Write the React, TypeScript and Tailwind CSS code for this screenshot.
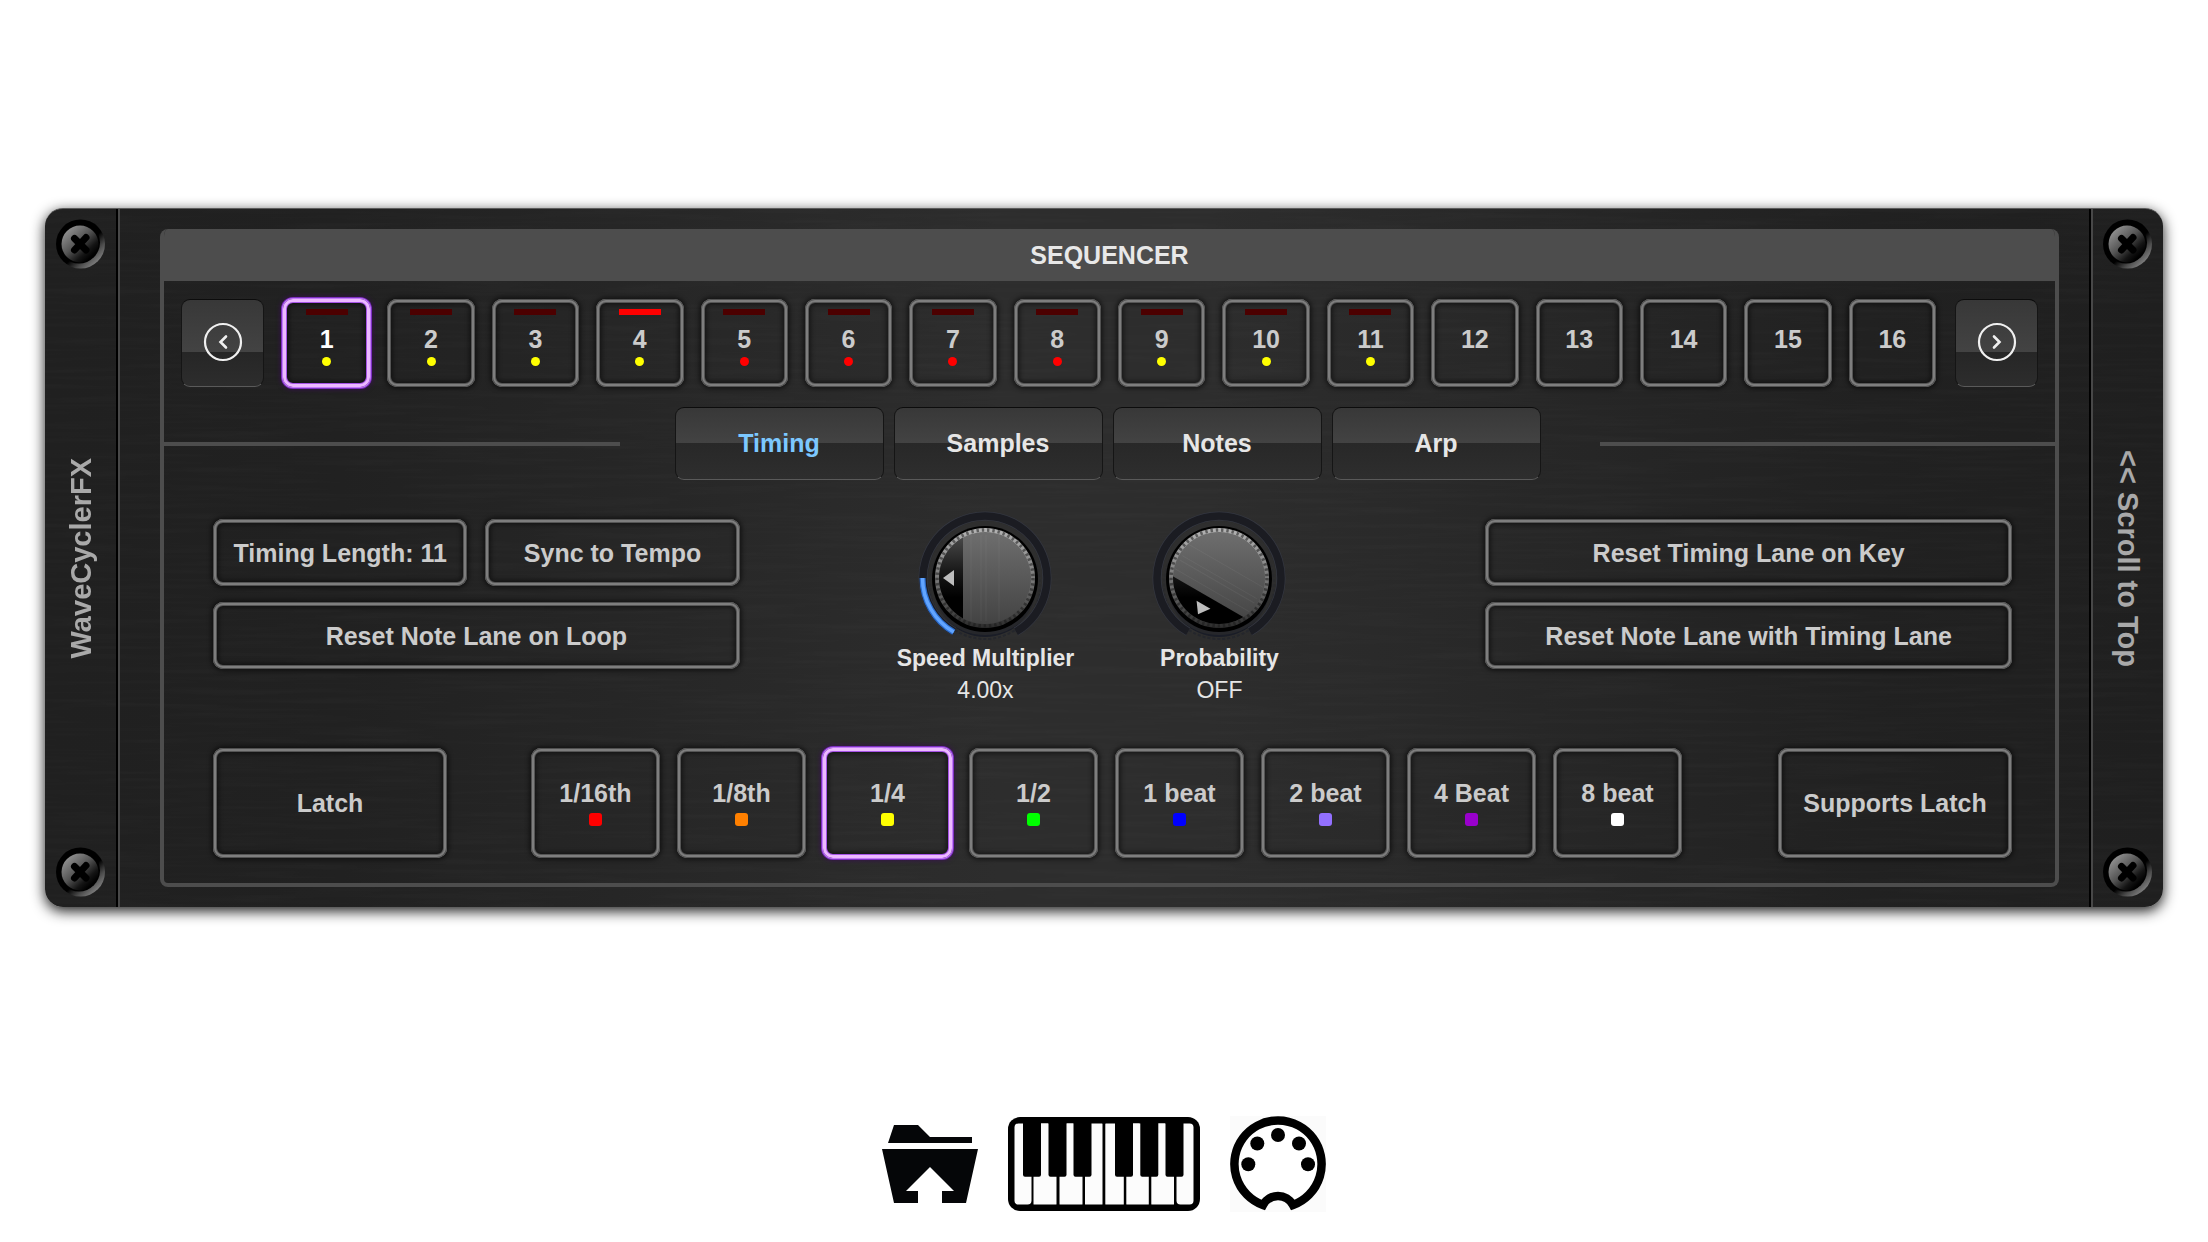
import { useId, useState, type ReactNode } from "react";

const OUTLINE =
  "rounded-[10px] shadow-[inset_0_0_0_1px_#505050,inset_0_0_0_3px_#7e7e7e,inset_0_0_0_4px_#555555,inset_0_0_4px_6px_rgba(0,0,0,0.45),0_0_4px_2px_rgba(0,0,0,0.5)]";
const OUTLINE_ACTIVE =
  "rounded-[10px] shadow-[inset_0_0_0_3px_#ecb9ff,inset_0_0_0_4px_#a653e6,inset_0_0_4px_6px_rgba(0,0,0,0.5),0_0_0_1px_#c27af8,0_0_0_2px_#7c2fc0,0_0_4px_3px_rgba(60,10,90,0.6)]";
const GLOSS_EDGE =
  "rounded-[9px] border border-x-[#151515] border-t-[#0c0c0c] border-b-[#5a5a5a]";

type Step = { n: number; dot?: "yellow" | "red"; bar?: "dim" | "lit" };

const steps: Step[] = Array.from({ length: 16 }, (_, i) => {
  const n = i + 1;
  if (n > 11) return { n };
  return { n, dot: n >= 5 && n <= 8 ? "red" : "yellow", bar: n === 4 ? "lit" : "dim" };
});

const lengths = [
  { label: "1/16th", color: "bg-[#ff0000]" },
  { label: "1/8th", color: "bg-[#ff8000]" },
  { label: "1/4", color: "bg-[#ffff00]" },
  { label: "1/2", color: "bg-[#00ff00]" },
  { label: "1 beat", color: "bg-[#0000ff]" },
  { label: "2 beat", color: "bg-[#9370ff]" },
  { label: "4 Beat", color: "bg-[#9900cc]" },
  { label: "8 beat", color: "bg-white" },
];

const tabs = ["Timing", "Samples", "Notes", "Arp"];

function BrushedMetal() {
  const id = useId();
  return (
    <svg className="pointer-events-none absolute inset-0 -z-10 h-full w-full rounded-[18px] opacity-[0.015]" aria-hidden="true">
      <filter id={id} x="0" y="0" width="100%" height="100%">
        <feTurbulence type="fractalNoise" baseFrequency="0.008 0.2" numOctaves="2" seed="4" />
        <feColorMatrix type="matrix" values="1 0 0 0 0  1 0 0 0 0  1 0 0 0 0  0 3 0 0 -1.2" />
      </filter>
      <rect width="100%" height="100%" filter={`url(#${id})`} />
    </svg>
  );
}

function Screw() {
  const id = useId();
  return (
    <svg viewBox="0 0 50 50" className="size-[50px] shrink-0" aria-hidden="true">
      <defs>
        <linearGradient id={`${id}rim`} x1="0.25" y1="0.2" x2="0.85" y2="0.85">
          <stop offset="0.55" stopColor="#000" />
          <stop offset="0.8" stopColor="#4c4c4c" />
          <stop offset="1" stopColor="#7a7a7a" />
        </linearGradient>
        <linearGradient id={`${id}head`} x1="0.15" y1="0.15" x2="0.8" y2="0.85">
          <stop offset="0" stopColor="#8c8c8c" />
          <stop offset="0.45" stopColor="#555" />
          <stop offset="0.8" stopColor="#141414" />
          <stop offset="1" stopColor="#000" />
        </linearGradient>
      </defs>
      <circle cx="24.500" cy="25" r="24.500" fill={`url(#${id}rim)`} />
      <circle cx="23" cy="23.500" r="21" fill="#000" />
      <circle cx="24" cy="25" r="18.500" fill={`url(#${id}head)`} />
      <path d="M18.500 19.500 Q23 24 30 31 M30 18.500 Q24 25 18.500 31" stroke="#000" strokeWidth="7" strokeLinecap="round" fill="none" />
    </svg>
  );
}

function NavButton({ dir }: { dir: "left" | "right" }) {
  return (
    <button
      type="button"
      aria-label={dir === "left" ? "Previous steps" : "Next steps"}
      className={`${GLOSS_EDGE} flex h-[88px] w-[83px] shrink-0 items-center justify-center bg-[linear-gradient(to_bottom,#383838_0%,#434343_61%,#262626_61%,#2d2d2d_100%)] pb-0.5`}
    >
      <svg viewBox="0 0 40 40" className="size-10" fill="none" stroke="#f0f0f0" aria-hidden="true">
        <circle cx="20" cy="20" r="18" strokeWidth="2.200" />
        <path d={dir === "left" ? "M23 14.500 17.500 20 23 25.500" : "M17 14.500 22.500 20 17 25.500"} strokeWidth="2.600" strokeLinecap="round" />
      </svg>
    </button>
  );
}

function OutlineButton({ children, className }: { children: ReactNode; className: string }) {
  return (
    <button type="button" className={`${OUTLINE} ${className} flex items-center justify-center whitespace-nowrap text-[25px] leading-7 font-bold text-[#cbcbcb]`}>
      {children}
    </button>
  );
}

function Knob({ label, value, angle, lit }: { label: string; value: string; angle: number; lit: boolean }) {
  const id = useId();
  return (
    <div className="flex w-[234px] flex-col items-center text-[23px] leading-6 text-[#e6e6e6]">
      <div className="relative">
        <svg viewBox="0 0 140 138" className="h-[138px] w-[140px]" fill="none" aria-hidden="true">
          <defs>
            <linearGradient id={`${id}rim`} x1="0" y1="0" x2="0" y2="1">
              <stop offset="0" stopColor="#b4b4b4" />
              <stop offset="0.5" stopColor="#7a7a7a" />
              <stop offset="1" stopColor="#2c2c2c" />
            </linearGradient>
            <linearGradient id={`${id}face`} x1="0" y1="0" x2="0" y2="1">
              <stop offset="0" stopColor="#6e6e6e" />
              <stop offset="1" stopColor="#434343" />
            </linearGradient>
            <linearGradient id={`${id}cut`} gradientUnits="userSpaceOnUse" x1="70" y1="30" x2="70" y2="100">
              <stop offset="0" stopColor="#474747" />
              <stop offset="0.45" stopColor="#1b1b1b" />
              <stop offset="0.85" stopColor="#000" />
            </linearGradient>
            <clipPath id={`${id}clip`}>
              <path d={angle === 0 ? "M0 0H48V140H0Z" : "M22.500 67.500 96 110V140H0V67.500Z"} />
            </clipPath>
          </defs>
          <circle cx="70" cy="78" r="51" fill="#1a1d27" />
          <circle cx="70" cy="76" r="55" stroke="#1c202b" strokeWidth="2" strokeDasharray="3 2" opacity="0.5" />
          <circle cx="70" cy="70" r="57" fill="#2f2f2f" opacity="0.6" />
          <path d="M39 123.700A62 62 0 1 1 101 123.700" stroke="#343741" strokeWidth="9" />
          <path d="M39 123.700A62 62 0 1 1 101 123.700" stroke="#1b1c22" strokeWidth="7.500" />
          {lit && (
            <>
              <path d="M7.500 70A62.500 62.500 0 0 0 38.750 124.100" stroke="#2d6fd0" strokeWidth="6" />
              <path d="M7.500 70A62.500 62.500 0 0 0 38.750 124.100" stroke="#62a5ff" strokeWidth="3.500" />
            </>
          )}
          <circle cx="70" cy="71" r="53" fill="#000" />
          <circle cx="70" cy="70" r="50" fill={`url(#${id}rim)`} />
          <circle cx="70" cy="70" r="48" stroke="#1c1c1c" strokeWidth="3.500" strokeDasharray="2.400 2.900" opacity="0.55" />
          <circle cx="70" cy="70" r="46" fill={`url(#${id}face)`} />
          <g transform={`rotate(${angle} 70 70)`} stroke="#fff" opacity="0.05">
            <path d="M56 27V113M66 27V113M71 27V113M84 27V113" />
          </g>
          <circle cx="70" cy="70" r="46" fill={`url(#${id}cut)`} clipPath={`url(#${id}clip)`} />
          <path d="M28 70 39 62V78Z" fill="#bdbdbd" transform={`rotate(${angle} 70 70)`} />
        </svg>
        <input
          id={id}
          type="range"
          min={0}
          max={100}
          defaultValue={lit ? 20 : 0}
          className="absolute inset-0 h-full w-full cursor-pointer opacity-0"
        />
      </div>
      <label htmlFor={id} className="font-bold whitespace-nowrap">{label}</label>
      <output htmlFor={id} className="mt-2">{value}</output>
    </div>
  );
}

function FolderIcon() {
  return (
    <svg viewBox="0 0 96 78" className="h-[78px] w-24" fill="#050608" aria-hidden="true">
      <path d="M12 0H36L48 12H90V18H6Z" />
      <path d="M0 24H96L84 78H60V66H72L48 42 24 66H36V78H12Z" />
    </svg>
  );
}

function KeyboardIcon() {
  const whites = [[6.500, 17], [25.500, 23], [51.500, 23], [77, 17.500], [97.300, 18.500], [118.300, 22.500], [143.300, 22.700], [168.500, 17]];
  const blacks = [15, 40.500, 65.500, 107, 132.300, 157.500];
  return (
    <svg viewBox="0 0 192 94" className="h-[94px] w-48" aria-hidden="true">
      <rect width="192" height="94" rx="12" fill="#000" />
      {whites.map(([x, w], i) => (
        <rect key={x} x={x} y="6.500" width={w} height="81" rx={i === 0 || i === 7 ? 4 : 0.5} fill="#fcfcfc" />
      ))}
      {[41, 66.500, 132.500, 158].map((x) => (
        <rect key={x} x={x - 8} y="6.500" width="7" height="52" fill="#fcfcfc" />
      ))}
      {blacks.map((x) => (
        <rect key={x} x={x} y="3" width="18" height="56.700" rx="2" fill="#000" />
      ))}
    </svg>
  );
}

function MidiIcon() {
  const pins = [[18.300, 48.300], [27.300, 27.500], [48, 19], [69, 27.500], [78, 48.300]];
  return (
    <svg viewBox="0 0 96 96" className="size-24 bg-[#fbfbfb]" aria-hidden="true">
      <path d="M33 89A43.600 43.600 0 1 1 63 89A17 17 0 0 0 33 89Z" fill="#fff" stroke="#000" strokeWidth="8.500" />
      {pins.map(([x, y]) => (
        <circle key={x} cx={x} cy={y} r="7" fill="#000" />
      ))}
    </svg>
  );
}

export default function App() {
  const [step, setStep] = useState(1);
  const [tab, setTab] = useState("Timing");
  const [length, setLength] = useState("1/4");

  return (
    <div className="flex min-h-screen flex-col bg-white px-[45px] pt-[208px] font-['Liberation_Sans',Arial,sans-serif]">
      <main className="relative isolate flex rounded-[18px] border-t border-[#5c5c5c] bg-[linear-gradient(to_right,#202020_0%,#212121_14%,#2d2d2d_45%,#2d2d2d_55%,#212121_86%,#1f1f1f_100%)] shadow-[0_4px_14px_rgba(0,0,0,0.9)]">
        <BrushedMetal />
        <aside className="flex w-[71px] shrink-0 flex-col items-center justify-between pt-[10px] pb-[10px]">
          <Screw />
          <h1 className="rotate-180 text-[29px] leading-8 font-bold whitespace-nowrap text-[#a9a9a9] [writing-mode:vertical-rl]">WaveCyclerFX</h1>
          <Screw />
        </aside>

        <div className="min-w-0 flex-1 border-x-2 border-black">
          <div className="border-l-2 border-[#484848] pt-5 pr-[30px] pb-5 pl-10">
            <section className="overflow-hidden rounded-[8px] border-4 border-t-0 border-[#4d4d4d]">
              <h2 className="h-[52px] bg-[#4d4d4d] text-center text-[25px] leading-[52px] font-bold text-[#e8e8e8]">SEQUENCER</h2>

              <div className="flex px-[17px] pt-[18px]">
                <NavButton dir="left" />
                <div className="mx-[19px] flex min-w-0 flex-1 gap-[17px]">
                  {steps.map((s) => (
                    <button
                      key={s.n}
                      type="button"
                      onClick={() => setStep(s.n)}
                      aria-pressed={step === s.n}
                      className={`${step === s.n ? OUTLINE_ACTIVE + " text-white" : OUTLINE + " text-[#cbcbcb]"} flex h-[88px] min-w-0 flex-1 flex-col items-center pt-[10px] text-[25px] leading-7 font-bold`}
                    >
                      <span className={`h-1.5 w-[42px] ${s.bar === "lit" ? "bg-[#ff0000]" : s.bar === "dim" ? "bg-[#4c0000]" : ""}`} />
                      <span className="mt-[10px]">{s.n}</span>
                      {s.dot && <span className={`mt-1 size-[9px] rounded-full ${s.dot === "red" ? "bg-[#ff0000]" : "bg-[#ffff00]"}`} />}
                    </button>
                  ))}
                </div>
                <NavButton dir="right" />
              </div>

              <div className="mt-5 flex items-center">
                <div className="h-1 flex-1 bg-[#4d4d4d]" />
                <nav className="mr-[59px] ml-[55px] flex gap-[10px]" aria-label="Lane">
                  {tabs.map((t) => (
                    <button
                      key={t}
                      type="button"
                      onClick={() => setTab(t)}
                      aria-pressed={tab === t}
                      className={`${GLOSS_EDGE} h-[73px] w-[209px] bg-[linear-gradient(to_bottom,#383838_0%,#434343_50%,#282828_50%,#2e2e2e_100%)] pb-0.5 text-[25px] leading-7 font-bold ${tab === t ? "text-[#7cc8ff]" : "text-[#e6e6e6]"}`}
                    >
                      {t}
                    </button>
                  ))}
                </nav>
                <div className="h-1 flex-1 bg-[#4d4d4d]" />
              </div>

              <div className="mt-7 grid grid-cols-[527fr_746fr_527fr] items-start pr-[43px] pl-[49px]">
                <div className="grid grid-cols-2 gap-x-[18px] gap-y-4 pt-[11px]">
                  <OutlineButton className="h-[67px]">Timing Length: 11</OutlineButton>
                  <OutlineButton className="h-[67px]">Sync to Tempo</OutlineButton>
                  <OutlineButton className="col-span-2 h-[67px]">Reset Note Lane on Loop</OutlineButton>
                </div>
                <div className="flex justify-center pr-5">
                  <Knob label="Speed Multiplier" value="4.00x" angle={0} lit />
                  <Knob label="Probability" value="OFF" angle={-60} lit={false} />
                </div>
                <div className="grid gap-y-4 pt-[11px]">
                  <OutlineButton className="h-[67px]">Reset Timing Lane on Key</OutlineButton>
                  <OutlineButton className="h-[67px]">Reset Note Lane with Timing Lane</OutlineButton>
                </div>
              </div>

              <div className="mt-[46px] flex pr-[43px] pb-[25px] pl-[49px]">
                <OutlineButton className="h-[110px] w-[234px] shrink-0">Latch</OutlineButton>
                <div className="mr-24 ml-[84px] flex min-w-0 flex-1 gap-[17px]">
                  {lengths.map((l) => (
                    <button
                      key={l.label}
                      type="button"
                      onClick={() => setLength(l.label)}
                      aria-pressed={length === l.label}
                      className={`${length === l.label ? OUTLINE_ACTIVE : OUTLINE} flex h-[110px] min-w-0 flex-1 flex-col items-center pt-[31px] text-[25px] leading-7 font-bold whitespace-nowrap text-[#cbcbcb]`}
                    >
                      {l.label}
                      <span className={`mt-1.5 size-[13px] rounded-[3px] ${l.color}`} />
                    </button>
                  ))}
                </div>
                <OutlineButton className="h-[110px] w-[234px] shrink-0">Supports Latch</OutlineButton>
              </div>
            </section>
          </div>
        </div>

        <aside className="flex w-[72px] shrink-0 flex-col items-center justify-between border-l-2 border-[#484848] pt-[10px] pb-[10px]">
          <Screw />
          <button type="button" className="text-[29px] leading-8 font-bold whitespace-nowrap text-[#a9a9a9] [writing-mode:vertical-rl]">&lt;&lt; Scroll to Top</button>
          <Screw />
        </aside>
      </main>

      <footer className="mt-[209px] flex items-center justify-center gap-[30px]">
        <button type="button" aria-label="Load file"><FolderIcon /></button>
        <button type="button" aria-label="Keyboard"><KeyboardIcon /></button>
        <button type="button" aria-label="MIDI"><MidiIcon /></button>
      </footer>
    </div>
  );
}
